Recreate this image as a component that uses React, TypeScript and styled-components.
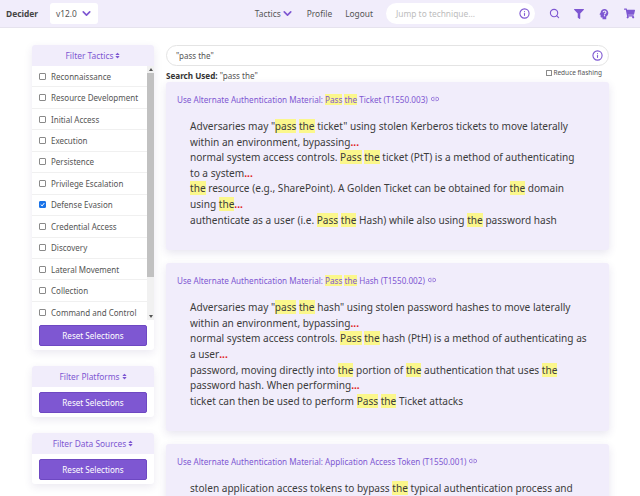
import React from "react";
import styled, { createGlobalStyle } from "styled-components";
import { FaFilter, FaShoppingCart, FaSort } from "react-icons/fa";
import { FiInfo, FiSearch, FiChevronDown, FiLink2 } from "react-icons/fi";

const purple = "#7e57d2";
const lavender = "#f1edfb";

const GlobalStyle = createGlobalStyle`
  html, body {
    margin: 0;
    width: 640px;
    height: 496px;
    overflow: hidden;
    background: #fff;
    font-family: "Noto Sans", "Open Sans", sans-serif;
    color: #3c3c3c;
  }
`;

const Page = styled.div`
  width: 640px;
  height: 496px;
  overflow: hidden;
`;

const Nav = styled.nav`
  height: 27px;
  background: ${lavender};
  border-bottom: 1px solid #e6e3ee;
  display: flex;
  align-items: center;
  padding: 0 5px 0 6px;
  font-size: 8.4px;
`;

const Brand = styled.div`
  font-weight: 700;
  color: #444;
  width: 44px;
`;

const VersionSelect = styled.div`
  width: 48px;
  height: 21px;
  box-sizing: border-box;
  background: #fff;
  border-radius: 3px;
  display: flex;
  align-items: center;
  justify-content: space-between;
  padding: 0 5px 0 6px;
  color: #555;
`;

const Chevron = styled(FiChevronDown)`
  color: ${purple};
  width: 13px;
  height: 13px;
  stroke-width: 3;
`;

const NavLinks = styled.div`
  margin-left: auto;
  display: flex;
  align-items: center;
  gap: 13px;
  color: #555;
`;

const NavLink = styled.span`
  display: flex;
  align-items: center;
`;

const JumpBox = styled.div`
  width: 149px;
  height: 21px;
  box-sizing: border-box;
  margin-left: 13px;
  background: #fff;
  border-radius: 11px;
  display: flex;
  align-items: center;
  justify-content: space-between;
  padding: 0 5px 0 10px;
  color: #bdbdbd;
`;

const NavIcons = styled.div`
  display: flex;
  align-items: center;
  gap: 14px;
  margin-left: 14px;
  color: ${purple};
  svg {
    display: block;
  }
`;

const Body = styled.div`
  display: flex;
  align-items: flex-start;
  padding-top: 17px;
`;

const Sidebar = styled.aside`
  width: 122px;
  margin-left: 32px;
  display: flex;
  flex-direction: column;
  gap: 16px;
`;

const FilterCard = styled.section`
  border-radius: 3px;
  background: #fff;
  box-shadow: 0 3px 8px rgba(60, 40, 120, 0.1);
`;

const FilterTitle = styled.div`
  height: 21px;
  background: ${lavender};
  border-radius: 3px 3px 0 0;
  display: flex;
  align-items: center;
  justify-content: center;
  gap: 2px;
  color: ${purple};
  font-size: 8.4px;
  svg {
    width: 5px;
    height: 7px;
  }
`;

const TacticScroller = styled.div`
  display: flex;
  height: 254px;
`;

const TacticList = styled.ul`
  flex: 1;
  margin: 0;
  padding: 0;
  list-style: none;
  overflow: hidden;
`;

const TacticRow = styled.li`
  height: 21.45px;
  box-sizing: border-box;
  border-bottom: 1px solid #f0f0f0;
  display: flex;
  align-items: center;
  gap: 5px;
  padding-left: 7px;
  font-size: 8px;
  color: #555;
  white-space: nowrap;
`;

const Check = styled.span<{ $on?: boolean }>`
  width: 7px;
  height: 7px;
  flex: none;
  box-sizing: border-box;
  border-radius: 1px;
  border: 1px solid ${(p) => (p.$on ? "#1a73e8" : "#8a8a8a")};
  background: ${(p) => (p.$on ? "#1a73e8" : "#fff")};
  display: flex;
  svg {
    display: block;
  }
`;

const Track = styled.div`
  width: 7px;
  background: #f1f1f1;
  position: relative;
`;

const Thumb = styled.div`
  position: absolute;
  top: 7px;
  left: 0;
  width: 7px;
  height: 204px;
  background: #c1c1c1;
`;

const Arrow = styled.div<{ $down?: boolean }>`
  position: absolute;
  left: 1.5px;
  ${(p) => (p.$down ? "bottom: 2px;" : "top: 2px;")}
  border-left: 2px solid transparent;
  border-right: 2px solid transparent;
  ${(p) => (p.$down ? "border-top" : "border-bottom")}: 3px solid #555;
`;

const ResetWrap = styled.div`
  padding: 5px 7px 4px;
`;

const ResetButton = styled.button`
  display: block;
  width: 100%;
  height: 21px;
  padding: 0;
  background: ${purple};
  border: 1px solid #6e48c2;
  border-radius: 2px;
  color: #fff;
  font: inherit;
  font-size: 8.1px;
`;

const Main = styled.main`
  width: 443px;
  margin-left: 12px;
`;

const SearchBox = styled.div`
  height: 21px;
  box-sizing: border-box;
  border: 1px solid #e4e4e4;
  border-radius: 11px;
  display: flex;
  align-items: center;
  justify-content: space-between;
  padding: 0 5px 0 9px;
  font-size: 8px;
  color: #555;
`;

const InfoIcon = styled(FiInfo)`
  color: ${purple};
  width: 11px;
  height: 11px;
  stroke-width: 2.4;
`;

const SearchMeta = styled.div`
  height: 16px;
  display: flex;
  align-items: flex-end;
  justify-content: space-between;
  font-size: 8.1px;
  line-height: 12px;
  color: #555;
  b {
    color: #333;
  }
`;

const Flashing = styled.label`
  display: flex;
  align-items: center;
  gap: 1.5px;
  align-self: flex-start;
  margin: 2px 7px 0 0;
  font-size: 6.5px;
  line-height: 9px;
`;

const FlashCheck = styled(Check)`
  width: 6px;
  height: 6px;
  border-radius: 0.5px;
`;

const Results = styled.div`
  display: flex;
  flex-direction: column;
  gap: 13px;
`;

const Result = styled.article`
  background: ${lavender};
  border-radius: 3px;
  box-shadow: 0 3px 8px rgba(60, 40, 120, 0.12);
  padding: 10px 11px 22px;
`;

const ResultTitle = styled.a`
  display: flex;
  align-items: center;
  height: 14px;
  color: ${purple};
  font-size: 8.15px;
  white-space: pre;
  svg {
    width: 8px;
    height: 8px;
    margin-left: 3px;
  }
`;

const Snippet = styled.p`
  margin: 13px 0 0;
  padding: 0 8px 0 13px;
  font-size: 10.1px;
  line-height: 15.6px;
  color: #3c3c3c;
`;

const Mark = styled.mark`
  background: #fbf78c;
  color: inherit;
`;

const Dots = styled.span`
  color: #e02020;
  font-weight: 700;
`;

const hl = (text: string) =>
  text.split(/(\[[^\]]+\])/).map((part, i) =>
    part.startsWith("[") ? <Mark key={i}>{part.slice(1, -1)}</Mark> : part,
  );

const Lines: React.FC<{ lines: string[] }> = ({ lines }) => (
  <Snippet>
    {lines.map((line, i) => {
      const cut = line.endsWith("...");
      const text = cut ? line.slice(0, -3) : line;
      return (
        <React.Fragment key={i}>
          {hl(text)}
          {cut && <Dots>...</Dots>}
          {i < lines.length - 1 && <br />}
        </React.Fragment>
      );
    })}
  </Snippet>
);

// head with a question mark, not in the icon packages in this shape
const HeadQuestion = () => (
  <svg viewBox="0 0 24 24" width="12" height="12">
    <path
      fill="currentColor"
      d="M13 2C8.8 2 5.4 5.2 5.2 9.4L3.2 12.2C2.9 12.7 3.2 13.3 3.8 13.3H5.2V17C5.2 18.2 6.1 19 7.2 19H9V22.5H16.5V17C18.9 15.7 20.6 13.1 20.6 10C20.6 5.6 17.3 2 13 2Z"
    />
    <path
      fill="none"
      stroke={lavender}
      strokeWidth="2.2"
      d="M10.2 8.6C10.4 7 11.6 6.1 13 6.1C14.6 6.1 15.9 7.2 15.9 8.6C15.9 10.4 13 10.6 13 12.8"
    />
    <rect x="11.8" y="14.2" width="2.4" height="2.4" fill={lavender} />
  </svg>
);

const tactics = [
  "Reconnaissance",
  "Resource Development",
  "Initial Access",
  "Execution",
  "Persistence",
  "Privilege Escalation",
  "Defense Evasion",
  "Credential Access",
  "Discovery",
  "Lateral Movement",
  "Collection",
  "Command and Control",
];

const results = [
  {
    title: "Use Alternate Authentication Material: [Pass] [the] Ticket (T1550.003)",
    lines: [
      'Adversaries may "[pass] [the] ticket" using stolen Kerberos tickets to move laterally',
      "within an environment, bypassing...",
      "normal system access controls. [Pass] [the] ticket (PtT) is a method of authenticating",
      "to a system...",
      "[the] resource (e.g., SharePoint). A Golden Ticket can be obtained for [the] domain",
      "using [the]...",
      "authenticate as a user (i.e. [Pass] [the] Hash) while also using [the] password hash",
    ],
  },
  {
    title: "Use Alternate Authentication Material: [Pass] [the] Hash (T1550.002)",
    lines: [
      'Adversaries may "[pass] [the] hash" using stolen password hashes to move laterally',
      "within an environment, bypassing...",
      "normal system access controls. [Pass] [the] hash (PtH) is a method of authenticating as",
      "a user...",
      "password, moving directly into [the] portion of [the] authentication that uses [the]",
      "password hash. When performing...",
      "ticket can then be used to perform [Pass] [the] Ticket attacks",
    ],
  },
  {
    title: "Use Alternate Authentication Material: Application Access Token (T1550.001)",
    lines: ["stolen application access tokens to bypass [the] typical authentication process and"],
  },
];

const Filter: React.FC<{ title: string; children?: React.ReactNode }> = ({ title, children }) => (
  <FilterCard>
    <FilterTitle>
      {title} <FaSort />
    </FilterTitle>
    {children}
    <ResetWrap>
      <ResetButton>Reset Selections</ResetButton>
    </ResetWrap>
  </FilterCard>
);

export default function App() {
  return (
    <Page>
      <GlobalStyle />
      <Nav>
        <Brand>Decider</Brand>
        <VersionSelect>
          v12.0 <Chevron />
        </VersionSelect>
        <NavLinks>
          <NavLink>
            Tactics <Chevron />
          </NavLink>
          <NavLink>Profile</NavLink>
          <NavLink>Logout</NavLink>
        </NavLinks>
        <JumpBox>
          Jump to technique... <InfoIcon />
        </JumpBox>
        <NavIcons>
          <FiSearch size={11} strokeWidth={2.4} />
          <FaFilter size={10} />
          <HeadQuestion />
          <FaShoppingCart size={11} />
        </NavIcons>
      </Nav>
      <Body>
        <Sidebar>
          <Filter title="Filter Tactics">
            <TacticScroller>
              <TacticList>
                {tactics.map((t) => (
                  <TacticRow key={t}>
                    <Check $on={t === "Defense Evasion"}>
                      {t === "Defense Evasion" && (
                        <svg viewBox="0 0 7 7" width="5" height="5">
                          <path d="M1 3.5 L3 5.5 L6 1.5" stroke="#fff" strokeWidth="1.4" fill="none" />
                        </svg>
                      )}
                    </Check>
                    {t}
                  </TacticRow>
                ))}
              </TacticList>
              <Track>
                <Arrow />
                <Thumb />
                <Arrow $down />
              </Track>
            </TacticScroller>
          </Filter>
          <Filter title="Filter Platforms" />
          <Filter title="Filter Data Sources" />
        </Sidebar>
        <Main>
          <SearchBox>
            "pass the" <InfoIcon />
          </SearchBox>
          <SearchMeta>
            <span>
              <b>Search Used:</b> "pass the"
            </span>
            <Flashing>
              <FlashCheck /> Reduce flashing
            </Flashing>
          </SearchMeta>
          <Results>
            {results.map((r, i) => (
              <Result key={i}>
                <ResultTitle>
                  <span>{hl(r.title)}</span>
                  <FiLink2 />
                </ResultTitle>
                <Lines lines={r.lines} />
              </Result>
            ))}
          </Results>
        </Main>
      </Body>
    </Page>
  );
}
